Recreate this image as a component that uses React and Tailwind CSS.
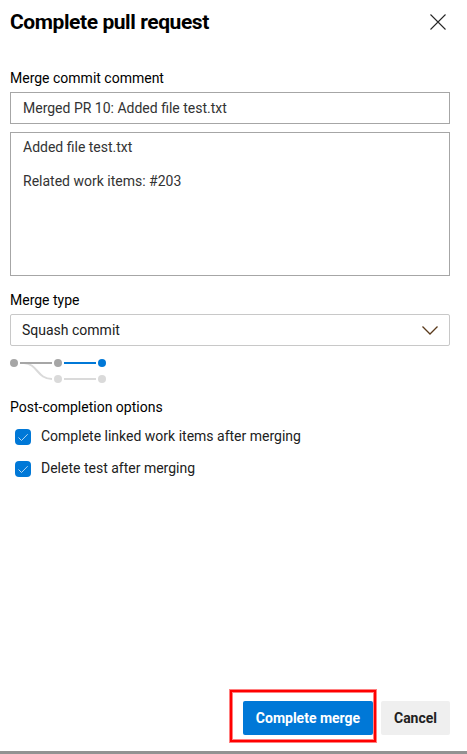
import React from "react";

function CheckOption({ label }) {
  return (
    <label className="flex h-8 items-center pl-[5px]">
      <span className="flex size-4 items-center justify-center rounded-[4px] bg-[#0078d7]">
        <svg className="size-4" viewBox="0 0 16 16" fill="none" stroke="#b5d8f4" strokeWidth="1">
          <path d="M3.5 8.5L6.5 11.5L12.7 5.2" />
        </svg>
      </span>
      <span className="mb-0.5 ml-[10px] text-[14px] leading-5 text-[#212121]">{label}</span>
    </label>
  );
}

function MergeGraph() {
  return (
    <svg className="mt-3 block h-[26px] w-24 shrink-0" viewBox="0 0 96 26" fill="none" strokeWidth="2">
      <path d="M10 5H14C28 6 27 21 42 21" stroke="#dadada" />
      <path d="M54 21H86" stroke="#dadada" />
      <path d="M10 5H42" stroke="#a6a6a6" />
      <path d="M54 5H86" stroke="#0078d7" />
      <circle cx="4" cy="5" r="4" fill="#a6a6a6" />
      <circle cx="48" cy="5" r="4" fill="#a6a6a6" />
      <circle cx="92" cy="5" r="4" fill="#0078d7" />
      <circle cx="48" cy="21" r="4" fill="#dadada" />
      <circle cx="92" cy="21" r="4" fill="#dadada" />
    </svg>
  );
}

export default function App() {
  return (
    <div className="flex h-[754px] w-[467px] flex-col bg-white font-['Roboto',sans-serif] text-[14px] leading-5 text-black">
      <main className="flex flex-1 flex-col pr-[17px] pl-[10px]">
        <header className="flex h-11 items-center justify-between pr-1">
          <h1 className="text-[21px] leading-6 font-bold tracking-[-0.02em]">Complete pull request</h1>
          <button aria-label="Close" className="size-4">
            <svg className="size-4" viewBox="0 0 16 16" fill="none" stroke="#262626" strokeWidth="1.1">
              <path d="M0.5 0.5L15.5 15.5M15.5 0.5L0.5 15.5" />
            </svg>
          </button>
        </header>
        <div className="mt-6">Merge commit comment</div>
        <div className="mt-1 flex h-8 items-center border border-[#a6a6a6] px-3 text-[#333]">
          Merged PR 10: Added file test.txt
        </div>
        <div className="mt-2 h-36 border border-[#a6a6a6] px-3 pt-1.5 leading-[17px] whitespace-pre-line text-[#333]">
          {"Added file test.txt\n\nRelated work items: #203"}
        </div>
        <div className="mt-[14px]">Merge type</div>
        <div className="mt-1 flex h-8 items-center justify-between rounded-[2px] border border-[#c8c8c8] pr-[11px] pl-[11px] text-[#212121]">
          <span>Squash commit</span>
          <svg className="h-[9px] w-4" viewBox="0 0 16 9" fill="none" stroke="#5a3a1c" strokeWidth="1.3">
            <path d="M0.5 0.5L8 8L15.5 0.5" />
          </svg>
        </div>
        <MergeGraph />
        <div className="mt-[13px] mb-1">Post-completion options</div>
        <CheckOption label="Complete linked work items after merging" />
        <CheckOption label="Delete test after merging" />
      </main>
      <footer className="mr-[17px] mb-[9px] flex items-start justify-end gap-[5px] text-[14px] font-bold">
        <div className="h-[52px] w-[146px] border-2 border-[#f00] pt-[9px] pl-[11px] shadow-[0_0_0_1px_#ff8080,inset_0_0_0_1px_#ff8080]">
          <button className="block h-[34px] w-[130px] rounded-[2px] bg-[#0078d7] text-white">Complete merge</button>
        </div>
        <button className="mt-[11px] h-[34px] w-[69px] rounded-[2px] bg-[#efefef] text-[#212121]">Cancel</button>
      </footer>
      <div className="h-[3px] bg-[#929292]" />
    </div>
  );
}
